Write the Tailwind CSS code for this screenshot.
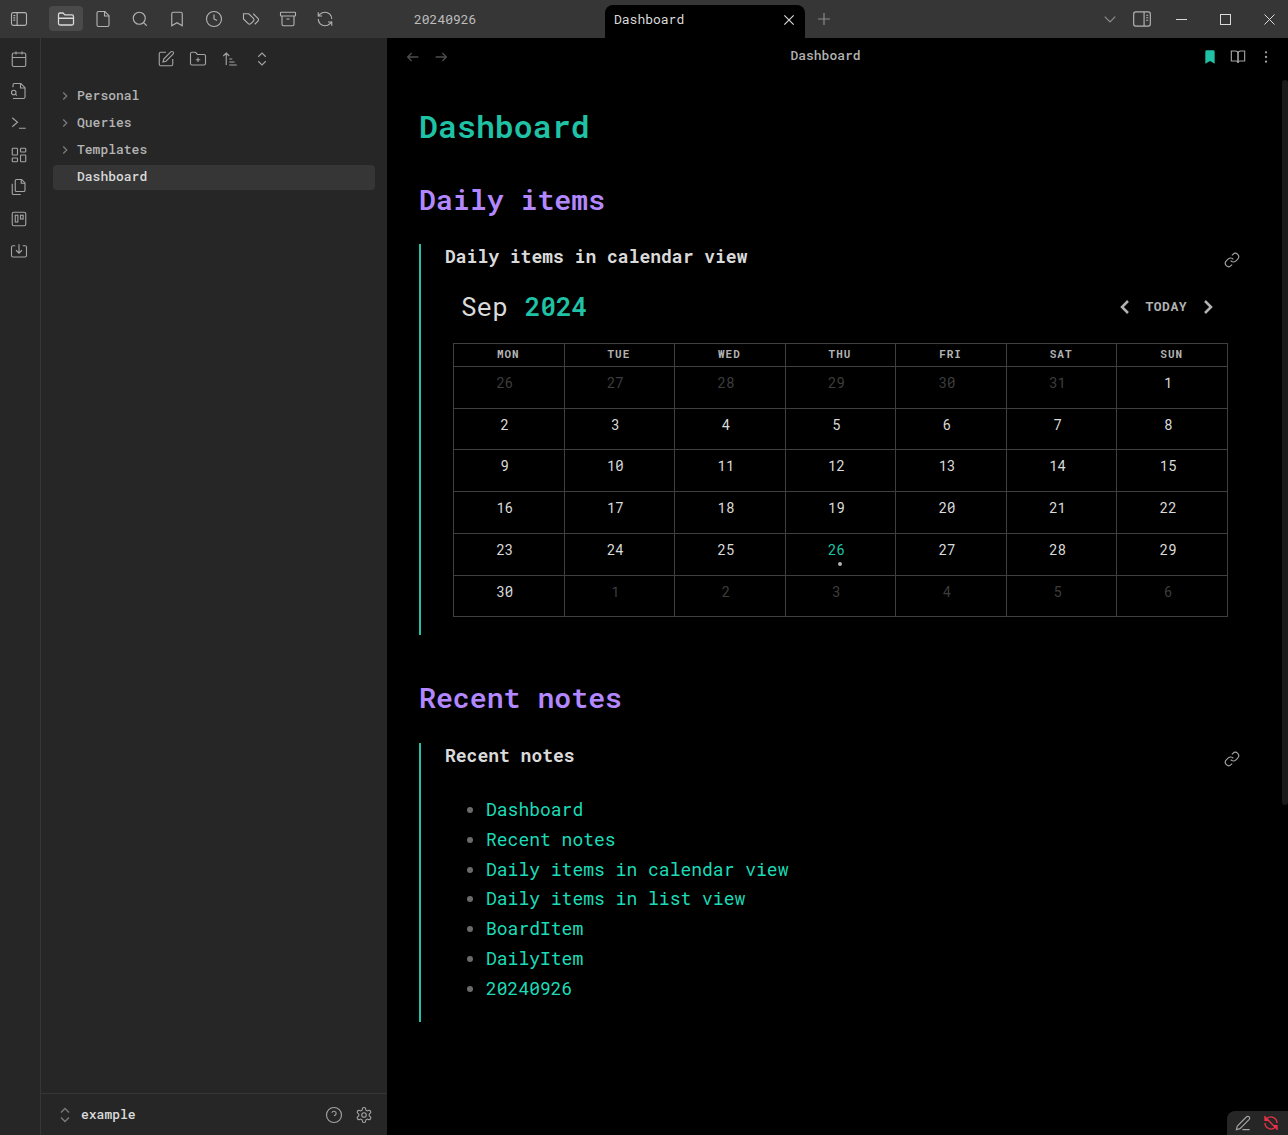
<!DOCTYPE html>
<html lang="en">
<head>
  <meta charset="UTF-8">
  <title>Dashboard</title>
  <script src="https://cdn.jsdelivr.net/npm/@tailwindcss/browser@4"></script>
</head>
<body class="bg-black h-[1135px] w-[1288px] overflow-hidden flex flex-col font-['Roboto_Mono','DejaVu_Sans_Mono',monospace] text-[13px]">

  <!-- title bar -->
  <div class="h-[38px] shrink-0 bg-[#363636] flex items-stretch text-[#b3b3b3]">
    <div class="w-[38px] flex items-center justify-center pb-[1px]">
      <svg class="w-[18px] h-[18px]" viewBox="0 0 24 24" fill="none" stroke="currentColor" stroke-width="1.5"><rect x="2" y="3.5" width="20" height="17" rx="2.5"/><path d="M9.5 3.5v17M4.5 7.5h2.5M4.5 10.5h2.5M4.5 13.5h2.5"/></svg>
    </div>
    <div class="flex items-center pl-[11px] pb-[1px] gap-[3px] w-[367px]">
      <div class="w-[34px] h-[25px] rounded-[4px] bg-[#4a4a4a] flex items-center justify-center text-[#dadada]">
        <svg class="w-[18px] h-[18px]" viewBox="0 0 24 24" fill="none" stroke="currentColor" stroke-width="1.7"><path d="M2 11V6a2 2 0 0 1 2-2h4l2.5 2.5H20a2 2 0 0 1 2 2V18a2 2 0 0 1-2 2H4a2 2 0 0 1-2-2v-7zM2 11h20"/></svg>
      </div>
      <div class="w-[34px] flex justify-center">
        <svg class="w-[18px] h-[18px]" viewBox="0 0 24 24" fill="none" stroke="currentColor" stroke-width="1.5"><path d="M14.5 2H6a2 2 0 0 0-2 2v16a2 2 0 0 0 2 2h12a2 2 0 0 0 2-2V7.5L14.5 2z"/><path d="M14 2v6h6"/></svg>
      </div>
      <div class="w-[34px] flex justify-center">
        <svg class="w-[18px] h-[18px]" viewBox="0 0 24 24" fill="none" stroke="currentColor" stroke-width="1.5"><circle cx="11" cy="11" r="8"/><path d="m21 21-4.3-4.3"/></svg>
      </div>
      <div class="w-[34px] flex justify-center">
        <svg class="w-[18px] h-[18px]" viewBox="0 0 24 24" fill="none" stroke="currentColor" stroke-width="1.5"><path d="m19 21-7-4-7 4V5a2 2 0 0 1 2-2h10a2 2 0 0 1 2 2v16z"/></svg>
      </div>
      <div class="w-[34px] flex justify-center">
        <svg class="w-[18px] h-[18px]" viewBox="0 0 24 24" fill="none" stroke="currentColor" stroke-width="1.5"><circle cx="12" cy="12" r="10"/><path d="M12 6v6l4 2"/></svg>
      </div>
      <div class="w-[34px] flex justify-center">
        <svg class="w-[18px] h-[18px]" viewBox="0 0 24 24" fill="none" stroke="currentColor" stroke-width="1.5"><path d="M9 5H2v7l6.29 6.29c.94.94 2.48.94 3.42 0l3.58-3.58c.94-.94.94-2.48 0-3.42L9 5Z"/><path d="M6 9.01V9"/><path d="m15 5 6.3 6.3a2.4 2.4 0 0 1 0 3.4L17 19"/></svg>
      </div>
      <div class="w-[34px] flex justify-center">
        <svg class="w-[18px] h-[18px]" viewBox="0 0 24 24" fill="none" stroke="currentColor" stroke-width="1.5"><rect x="2" y="3" width="20" height="5" rx="1"/><path d="M4 8v11a2 2 0 0 0 2 2h12a2 2 0 0 0 2-2V8"/><path d="M10 12h4"/></svg>
      </div>
      <div class="w-[34px] flex justify-center">
        <svg class="w-[18px] h-[18px]" viewBox="0 0 24 24" fill="none" stroke="currentColor" stroke-width="1.5"><path d="M21 12a9 9 0 0 0-9-9 9.75 9.75 0 0 0-6.74 2.74L3 8"/><path d="M3 3v5h5"/><path d="M3 12a9 9 0 0 0 9 9 9.75 9.75 0 0 0 6.74-2.74L21 16"/><path d="M16 16h5v5"/></svg>
      </div>
    </div>
    <!-- tabs -->
    <div class="w-[200px] flex items-center pl-[9px] pt-[1px] text-[#bdbdbd]">20240926</div>
    <div class="w-[200px] mt-[5px] pb-[4px] bg-black rounded-t-[8px] flex items-center justify-between pl-[9px] pr-[9px] text-[#dadada]">
      <span>Dashboard</span>
      <svg class="w-[14px] h-[14px]" viewBox="0 0 24 24" fill="none" stroke="currentColor" stroke-width="2"><path d="M4 4l16 16M20 4 4 20"/></svg>
    </div>
    <div class="flex items-center pl-[10px] text-[#8a8a8a]">
      <svg class="w-[18px] h-[18px]" viewBox="0 0 24 24" fill="none" stroke="currentColor" stroke-width="1.6"><path d="M12 4v16M4 12h16"/></svg>
    </div>
    <div class="flex-1 flex items-center justify-end">
      <svg class="w-[14px] h-[14px] mr-[15px] text-[#8f8f8f]" viewBox="0 0 24 24" fill="none" stroke="currentColor" stroke-width="2"><path d="m3 8 9 9 9-9"/></svg>
      <svg class="w-[20px] h-[20px] mr-[10px]" viewBox="0 0 24 24" fill="none" stroke="currentColor" stroke-width="1.4"><rect x="2" y="3.5" width="20" height="17" rx="2.5"/><path d="M14.5 3.5v17M17 7.5h2.5M17 10.5h2.5M17 13.5h2.5"/></svg>
      <div class="w-[38px] flex justify-center text-[#dadada]">
        <svg class="w-[11px] h-[11px]" viewBox="0 0 11 11" fill="none" stroke="currentColor"><path d="M0 5.5h11"/></svg>
      </div>
      <div class="w-[50px] flex justify-center text-[#dadada]">
        <svg class="w-[11px] h-[11px]" viewBox="0 0 11 11" fill="none" stroke="currentColor"><rect x=".5" y=".5" width="10" height="10"/></svg>
      </div>
      <div class="w-[38px] flex justify-center text-[#dadada]">
        <svg class="w-[11px] h-[11px]" viewBox="0 0 11 11" fill="none" stroke="currentColor"><path d="M.5.5l10 10M10.5.5l-10 10"/></svg>
      </div>
    </div>
  </div>

  <div class="flex-1 flex min-h-0">
    <!-- ribbon -->
    <div class="w-[41px] shrink-0 bg-[#262626] border-r border-[#363636] flex flex-col items-center pt-[12px] pr-[2px] gap-[14px] text-[#a3a3a3]">
      <svg class="w-[18px] h-[18px]" viewBox="0 0 24 24" fill="none" stroke="currentColor" stroke-width="1.5"><rect x="3" y="4" width="18" height="18" rx="2"/><path d="M16 2v4M8 2v4M3 10h18"/></svg>
      <svg class="w-[18px] h-[18px]" viewBox="0 0 24 24" fill="none" stroke="currentColor" stroke-width="1.5"><path d="M4 22h14a2 2 0 0 0 2-2V7.5L14.5 2H6a2 2 0 0 0-2 2v3"/><path d="M14 2v6h6"/><path d="M5 17a3 3 0 1 0 0-6 3 3 0 0 0 0 6z"/><path d="m9 18-1.5-1.5"/></svg>
      <svg class="w-[18px] h-[18px]" viewBox="0 0 24 24" fill="none" stroke="currentColor" stroke-width="1.5"><path d="m3 5 7 6-7 6M12 19h9"/></svg>
      <svg class="w-[18px] h-[18px]" viewBox="0 0 24 24" fill="none" stroke="currentColor" stroke-width="1.5"><rect x="3" y="3" width="7" height="9" rx="1"/><rect x="14" y="3" width="7" height="5" rx="1"/><rect x="14" y="12" width="7" height="9" rx="1"/><rect x="3" y="16" width="7" height="5" rx="1"/></svg>
      <svg class="w-[18px] h-[18px]" viewBox="0 0 24 24" fill="none" stroke="currentColor" stroke-width="1.5"><path d="M15.5 2H8.6c-.4 0-.8.2-1.1.5-.3.3-.5.7-.5 1.1v12.8c0 .4.2.8.5 1.1.3.3.7.5 1.1.5h9.8c.4 0 .8-.2 1.1-.5.3-.3.5-.7.5-1.1V6.5L15.5 2z"/><path d="M3 7.6v12.8c0 .4.2.8.5 1.1.3.3.7.5 1.1.5h9.8"/><path d="M15 2v5h5"/></svg>
      <svg class="w-[18px] h-[18px]" viewBox="0 0 24 24" fill="none" stroke="currentColor" stroke-width="1.5"><rect x="3" y="3" width="18" height="18" rx="2"/><rect x="7" y="7" width="3.5" height="9"/><rect x="14" y="7" width="3.5" height="5"/></svg>
      <svg class="w-[18px] h-[18px]" viewBox="0 0 24 24" fill="none" stroke="currentColor" stroke-width="1.5"><path d="M7 5H4a2 2 0 0 0-2 2v11a2 2 0 0 0 2 2h16a2 2 0 0 0 2-2V7a2 2 0 0 0-2-2h-3"/><path d="M12 3v12M8 11l4 4 4-4"/></svg>
    </div>

    <!-- file explorer -->
    <div class="w-[346px] shrink-0 bg-[#262626] flex flex-col">
      <div class="h-[42px] flex items-center justify-center gap-[14px] text-[#a3a3a3]">
        <svg class="w-[18px] h-[18px]" viewBox="0 0 24 24" fill="none" stroke="currentColor" stroke-width="1.5"><path d="M12 3H5a2 2 0 0 0-2 2v14a2 2 0 0 0 2 2h14a2 2 0 0 0 2-2v-7"/><path d="M18.375 2.625a2.121 2.121 0 1 1 3 3L12 15l-4 1 1-4Z"/></svg>
        <svg class="w-[18px] h-[18px]" viewBox="0 0 24 24" fill="none" stroke="currentColor" stroke-width="1.5"><path d="M12 10v6M9 13h6"/><path d="M20 20a2 2 0 0 0 2-2V8a2 2 0 0 0-2-2h-7.9a2 2 0 0 1-1.69-.9L9.6 3.9A2 2 0 0 0 7.93 3H4a2 2 0 0 0-2 2v13a2 2 0 0 0 2 2Z"/></svg>
        <svg class="w-[18px] h-[18px]" viewBox="0 0 24 24" fill="none" stroke="currentColor" stroke-width="1.5"><path d="m3 8 4-4 4 4M7 4v16M11 12h4M11 16h7M11 20h10"/></svg>
        <svg class="w-[18px] h-[18px]" viewBox="0 0 24 24" fill="none" stroke="currentColor" stroke-width="1.5"><path d="m7 15 5 5 5-5M7 9l5-5 5 5"/></svg>
      </div>
      <div class="flex-1 px-[12px] pt-[2px] text-[#b3b3b3] font-medium">
        <div class="h-[27px] flex items-center pl-[5px]">
          <svg class="w-[14px] h-[14px] mr-[5px] text-[#7a7a7a]" viewBox="0 0 24 24" fill="none" stroke="currentColor" stroke-width="2.2"><path d="m9 18 6-6-6-6"/></svg>
          <span>Personal</span>
        </div>
        <div class="h-[27px] flex items-center pl-[5px]">
          <svg class="w-[14px] h-[14px] mr-[5px] text-[#7a7a7a]" viewBox="0 0 24 24" fill="none" stroke="currentColor" stroke-width="2.2"><path d="m9 18 6-6-6-6"/></svg>
          <span>Queries</span>
        </div>
        <div class="h-[27px] flex items-center pl-[5px]">
          <svg class="w-[14px] h-[14px] mr-[5px] text-[#7a7a7a]" viewBox="0 0 24 24" fill="none" stroke="currentColor" stroke-width="2.2"><path d="m9 18 6-6-6-6"/></svg>
          <span>Templates</span>
        </div>
        <div class="h-[25px] mt-[2px] pb-[2px] rounded-[4px] bg-[#363636] flex items-center pl-[24px] text-[#dadada]">Dashboard</div>
      </div>
      <div class="h-[42px] border-t border-[#363636] flex items-center pl-[18px] pr-[14px] text-[#dadada]">
        <svg class="w-[12px] h-[16px] mr-[10px] text-[#7a7a7a]" viewBox="0 0 12 16" fill="none" stroke="currentColor" stroke-width="1.4"><path d="m2 5.5 4-4 4 4M2 10.5l4 4 4-4"/></svg>
        <span class="flex-1 font-medium">example</span>
        <svg class="w-[18px] h-[18px] mr-[12px] text-[#a3a3a3]" viewBox="0 0 24 24" fill="none" stroke="currentColor" stroke-width="1.5"><circle cx="12" cy="12" r="10"/><path d="M9.09 9a3 3 0 0 1 5.83 1c0 2-3 3-3 3M12 17h.01"/></svg>
        <svg class="w-[18px] h-[18px] text-[#a3a3a3]" viewBox="0 0 24 24" fill="none" stroke="currentColor" stroke-width="1.5"><path d="M12.22 2h-.44a2 2 0 0 0-2 2v.18a2 2 0 0 1-1 1.73l-.43.25a2 2 0 0 1-2 0l-.15-.08a2 2 0 0 0-2.73.73l-.22.38a2 2 0 0 0 .73 2.73l.15.1a2 2 0 0 1 1 1.72v.51a2 2 0 0 1-1 1.74l-.15.09a2 2 0 0 0-.73 2.73l.22.38a2 2 0 0 0 2.73.73l.15-.08a2 2 0 0 1 2 0l.43.25a2 2 0 0 1 1 1.73V20a2 2 0 0 0 2 2h.44a2 2 0 0 0 2-2v-.18a2 2 0 0 1 1-1.73l.43-.25a2 2 0 0 1 2 0l.15.08a2 2 0 0 0 2.73-.73l.22-.39a2 2 0 0 0-.73-2.73l-.15-.08a2 2 0 0 1-1-1.74v-.5a2 2 0 0 1 1-1.74l.15-.09a2 2 0 0 0 .73-2.73l-.22-.38a2 2 0 0 0-2.73-.73l-.15.08a2 2 0 0 1-2 0l-.43-.25a2 2 0 0 1-1-1.73V4a2 2 0 0 0-2-2z"/><circle cx="12" cy="12" r="3"/></svg>
      </div>
    </div>

    <!-- note pane -->
    <div class="relative flex-1 min-w-0 bg-black flex flex-col">
      <div class="h-[36px] shrink-0 flex items-center pl-[18px] pr-[14px]">
        <svg class="w-[16px] h-[16px] mt-[2px] text-[#4d4d4d] mr-[12px]" viewBox="0 0 24 24" fill="none" stroke="currentColor" stroke-width="2"><path d="M20 12H4M10 6l-6 6 6 6"/></svg>
        <svg class="w-[16px] h-[16px] mt-[2px] text-[#4d4d4d]" viewBox="0 0 24 24" fill="none" stroke="currentColor" stroke-width="2"><path d="M4 12h16M14 6l6 6-6 6"/></svg>
        <span class="flex-1 text-center text-[#b3b3b3] font-medium">Dashboard</span>
        <svg class="w-[16px] h-[16px] mt-[2px] text-[#1fc2a5] mr-[12px]" viewBox="0 0 24 24" fill="currentColor"><path d="M19 22l-7-4-7 4V4a2 2 0 0 1 2-2h10a2 2 0 0 1 2 2z"/></svg>
        <svg class="w-[16px] h-[16px] mt-[2px] text-[#a3a3a3] mr-[12px]" viewBox="0 0 24 24" fill="none" stroke="currentColor" stroke-width="1.7"><path d="M2 3h6a4 4 0 0 1 4 4v14a3 3 0 0 0-3-3H2z"/><path d="M22 3h-6a4 4 0 0 0-4 4v14a3 3 0 0 1 3-3h7z"/></svg>
        <svg class="w-[16px] h-[16px] mt-[2px] text-[#a3a3a3]" viewBox="0 0 24 24" fill="currentColor"><circle cx="12" cy="5" r="1.7"/><circle cx="12" cy="12" r="1.7"/><circle cx="12" cy="19" r="1.7"/></svg>
      </div>

      <div class="flex-1 pl-[32px] pr-[47px] pt-[31px]">
        <h1 class="text-[31.6px] leading-[42px] font-semibold text-[#1fc2a5]">Dashboard</h1>

        <h2 class="mt-[33px] text-[28.2px] leading-[38px] font-semibold text-[#b388ff]">Daily items</h2>

        <!-- calendar block -->
        <div class="mt-[26px] border-l-2 border-[#1fc2a5] h-[391px] pl-[24px] relative">
          <div class="flex items-center justify-between h-[25px]">
            <span class="text-[18px] font-bold text-[#dadada]">Daily items in calendar view</span>
            <svg class="w-[16px] h-[16px] text-[#a3a3a3] mt-[6px] mr-[1px]" viewBox="0 0 24 24" fill="none" stroke="currentColor" stroke-width="1.7"><path d="M10 13a5 5 0 0 0 7.54.54l3-3a5 5 0 0 0-7.07-7.07l-1.72 1.71"/><path d="M14 11a5 5 0 0 0-7.54-.54l-3 3a5 5 0 0 0 7.07 7.07l1.71-1.71"/></svg>
          </div>
          <div class="mt-[19px] h-[36px] flex items-center pl-[16px] pr-[21px] text-[26px]">
            <span class="text-[#dadada]">Sep</span>
            <span class="ml-[17px] font-semibold text-[#1fc2a5]">2024</span>
            <div class="ml-auto mt-[1px] flex items-center text-[#b3b3b3]">
              <svg class="w-[24px] h-[24px]" viewBox="0 0 24 24" fill="none" stroke="currentColor" stroke-width="2.5"><path d="m15 18-6-6 6-6"/></svg>
              <span class="text-[13px] font-bold tracking-[0.5px] ml-[8px] mr-[9px]">TODAY</span>
              <svg class="w-[24px] h-[24px]" viewBox="0 0 24 24" fill="none" stroke="currentColor" stroke-width="2.5"><path d="m9 18 6-6-6-6"/></svg>
            </div>
          </div>
          <table class="mt-[19px] ml-[8px] w-[775px] table-fixed border-collapse text-[14px] text-[#dadada]">
            <thead>
              <tr class="h-[23px] text-[11px] tracking-[1px] text-[#b3b3b3]">
                <th class="border border-[#3f3f3f] font-bold pr-[1px] pb-[1px]">MON</th><th class="border border-[#3f3f3f] font-bold pr-[1px] pb-[1px]">TUE</th><th class="border border-[#3f3f3f] font-bold pr-[1px] pb-[1px]">WED</th><th class="border border-[#3f3f3f] font-bold pr-[1px] pb-[1px]">THU</th><th class="border border-[#3f3f3f] font-bold pr-[1px] pb-[1px]">FRI</th><th class="border border-[#3f3f3f] font-bold pr-[1px] pb-[1px]">SAT</th><th class="border border-[#3f3f3f] font-bold pr-[1px] pb-[1px]">SUN</th>
              </tr>
            </thead>
            <tbody id="cal"></tbody>
          </table>
        </div>

        <h2 class="mt-[43px] text-[28.2px] leading-[38px] font-semibold text-[#b388ff]">Recent notes</h2>

        <!-- recent notes block -->
        <div class="mt-[27px] border-l-2 border-[#1fc2a5] h-[279px] pl-[24px]">
          <div class="flex items-center justify-between h-[25px]">
            <span class="text-[18px] font-bold text-[#dadada]">Recent notes</span>
            <svg class="w-[16px] h-[16px] text-[#a3a3a3] mt-[6px] mr-[1px]" viewBox="0 0 24 24" fill="none" stroke="currentColor" stroke-width="1.7"><path d="M10 13a5 5 0 0 0 7.54.54l3-3a5 5 0 0 0-7.07-7.07l-1.72 1.71"/><path d="M14 11a5 5 0 0 0-7.54-.54l-3 3a5 5 0 0 0 7.07 7.07l1.71-1.71"/></svg>
          </div>
          <ul class="mt-[27px] list-disc pl-[41px] text-[18px] leading-[29.8px] text-[#1cdcb8] marker:text-[#6b6b6b]">
            <li>Dashboard</li>
            <li>Recent notes</li>
            <li>Daily items in calendar view</li>
            <li>Daily items in list view</li>
            <li>BoardItem</li>
            <li>DailyItem</li>
            <li>20240926</li>
          </ul>
        </div>
      </div>

      <!-- overlay scrollbar and status bar -->
      <div class="absolute right-0 top-[42px] w-[6px] h-[725px] bg-[#191919] rounded-[3px]"></div>
      <div class="absolute right-0 bottom-0 w-[61px] h-[24px] bg-[#262626] rounded-tl-[8px] flex items-center pl-[8px] gap-[12px]">
        <svg class="w-[16px] h-[16px] text-[#a3a3a3]" viewBox="0 0 24 24" fill="none" stroke="currentColor" stroke-width="1.7"><path d="M17 3a2.85 2.83 0 1 1 4 4L7.5 20.5 2 22l1.5-5.5ZM11 22h11"/></svg>
        <svg class="w-[16px] h-[16px] text-[#e93147]" viewBox="0 0 24 24" fill="none" stroke="currentColor" stroke-width="2"><path d="M21 12a9 9 0 0 0-15-6.7L3 8M3 3v5h5M3 12a9 9 0 0 0 15 6.7L21 16M16 16h5v5M2 2l20 20"/></svg>
      </div>
    </div>
  </div>

  <script>
    // calendar rows: [day, tone]
    const rows = [
      [["26",1],["27",1],["28",1],["29",1],["30",1],["31",1],["1",0]],
      [["2",0],["3",0],["4",0],["5",0],["6",0],["7",0],["8",0]],
      [["9",0],["10",0],["11",0],["12",0],["13",0],["14",0],["15",0]],
      [["16",0],["17",0],["18",0],["19",0],["20",0],["21",0],["22",0]],
      [["23",0],["24",0],["25",0],["26",2],["27",0],["28",0],["29",0]],
      [["30",0],["1",1],["2",1],["3",1],["4",1],["5",1],["6",1]]
    ];
    const heights = ["h-[42px]", "h-[41px]", "h-[42px]", "h-[42px]", "h-[42px]", "h-[41px]"];
    const tones = ["text-[#dadada]", "text-[#3d3d3d]", "text-[#1fc2a5]"];
    const cal = document.getElementById("cal");
    rows.forEach((row, i) => {
      const tr = document.createElement("tr");
      tr.className = heights[i];
      row.forEach(([day, tone]) => {
        const td = document.createElement("td");
        td.className = "relative border border-[#3f3f3f] align-top pt-[5px] pr-[8px] text-center " + tones[tone];
        td.textContent = day;
        if (tone === 2) {
          const dot = document.createElement("span");
          dot.className = "absolute left-[52px] top-[28px] w-[4px] h-[4px] rounded-full bg-[#b3b3b3]";
          td.appendChild(dot);
        }
        tr.appendChild(td);
      });
      cal.appendChild(tr);
    });
  </script>
</body>
</html>
